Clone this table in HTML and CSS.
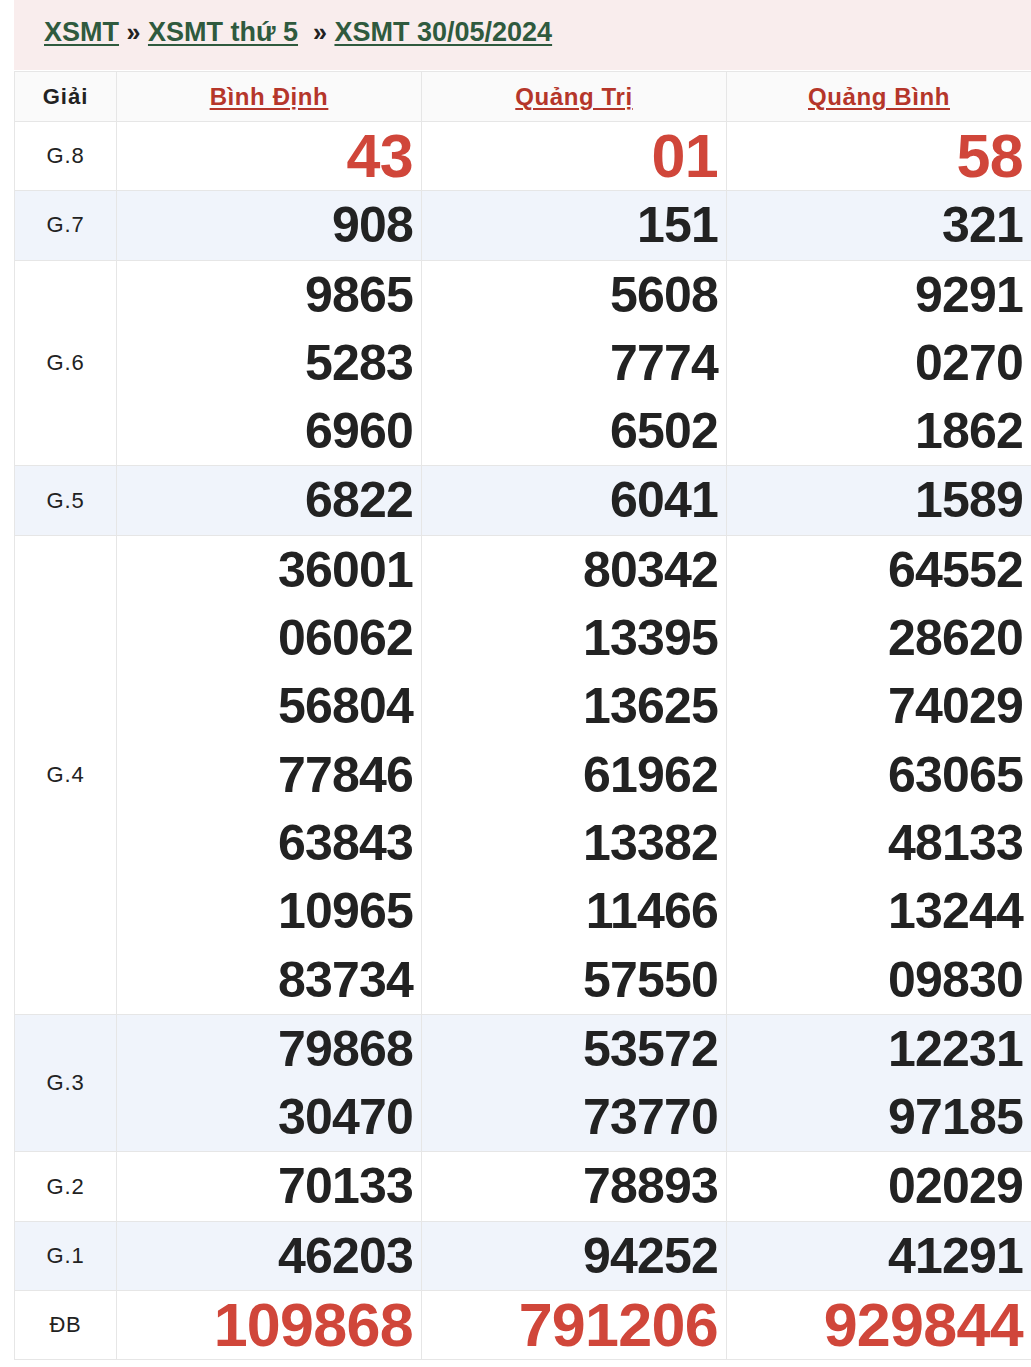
FILE: index.html
```html
<!DOCTYPE html>
<html lang="vi">
<head>
<meta charset="utf-8">
<title>XSMT 30/05/2024</title>
<link rel="stylesheet" href="styles.css">
</head>
<body>
<div class="page">
  <div class="crumbs">
    <a href="#">XSMT</a> <span class="sep">»</span> <a href="#">XSMT thứ 5</a> &nbsp;<span class="sep">»</span> <a href="#">XSMT 30/05/2024</a>
  </div>
  <table class="results">
    <colgroup>
      <col class="c-label"><col class="c-prov"><col class="c-prov"><col class="c-prov">
    </colgroup>
    <thead>
      <tr class="head">
        <th class="label-h">Giải</th>
        <th><a href="#">Bình Định</a></th>
        <th><a href="#">Quảng Trị</a></th>
        <th><a href="#">Quảng Bình</a></th>
      </tr>
    </thead>
    <tbody>
      <tr>
        <td class="lbl">G.8</td>
        <td class="num red big"><div>43</div></td>
        <td class="num red big"><div>01</div></td>
        <td class="num red big"><div>58</div></td>
      </tr>
      <tr class="alt">
        <td class="lbl">G.7</td>
        <td class="num"><div>908</div></td>
        <td class="num"><div>151</div></td>
        <td class="num"><div>321</div></td>
      </tr>
      <tr>
        <td class="lbl">G.6</td>
        <td class="num"><div>9865</div><div>5283</div><div>6960</div></td>
        <td class="num"><div>5608</div><div>7774</div><div>6502</div></td>
        <td class="num"><div>9291</div><div>0270</div><div>1862</div></td>
      </tr>
      <tr class="alt">
        <td class="lbl">G.5</td>
        <td class="num"><div>6822</div></td>
        <td class="num"><div>6041</div></td>
        <td class="num"><div>1589</div></td>
      </tr>
      <tr>
        <td class="lbl">G.4</td>
        <td class="num"><div>36001</div><div>06062</div><div>56804</div><div>77846</div><div>63843</div><div>10965</div><div>83734</div></td>
        <td class="num"><div>80342</div><div>13395</div><div>13625</div><div>61962</div><div>13382</div><div>11466</div><div>57550</div></td>
        <td class="num"><div>64552</div><div>28620</div><div>74029</div><div>63065</div><div>48133</div><div>13244</div><div>09830</div></td>
      </tr>
      <tr class="alt">
        <td class="lbl">G.3</td>
        <td class="num"><div>79868</div><div>30470</div></td>
        <td class="num"><div>53572</div><div>73770</div></td>
        <td class="num"><div>12231</div><div>97185</div></td>
      </tr>
      <tr>
        <td class="lbl">G.2</td>
        <td class="num"><div>70133</div></td>
        <td class="num"><div>78893</div></td>
        <td class="num"><div>02029</div></td>
      </tr>
      <tr class="alt">
        <td class="lbl">G.1</td>
        <td class="num"><div>46203</div></td>
        <td class="num"><div>94252</div></td>
        <td class="num"><div>41291</div></td>
      </tr>
      <tr>
        <td class="lbl">ĐB</td>
        <td class="num red big"><div>109868</div></td>
        <td class="num red big"><div>791206</div></td>
        <td class="num red big"><div>929844</div></td>
      </tr>
    </tbody>
  </table>
</div>
</body>
</html>
```
FILE: styles.css
```css
html, body {
  margin: 0;
  padding: 0;
  background: #ffffff;
}
body {
  font-family: "Liberation Sans", Arial, sans-serif;
  color: #222222;
  overflow: hidden;
}
.page {
  margin-left: 14px;
  width: 1017px;
}
.crumbs {
  background: #f9eded;
  height: 70px;
  box-sizing: border-box;
  padding: 15px 0 0 30px;
  font-size: 27px;
  font-weight: bold;
  line-height: 34px;
  color: #222;
}
.crumbs a {
  color: #2f5a3e;
  text-decoration: underline;
  text-underline-offset: 3px;
  text-decoration-thickness: 2px;
}
.crumbs .sep {
  color: #222;
  font-size: 25px;
}
.results {
  width: 1017px;
  table-layout: fixed;
  border-collapse: collapse;
  margin-top: 1px;
}
.c-label { width: 102px; }
.c-prov { width: 305px; }
.results th,
.results td {
  border: 1px solid #e6e6e6;
  padding: 0;
}
.results tr.head th {
  background: #fafafa;
  height: 49px;
  font-size: 24px;
  letter-spacing: 0.6px;
  font-weight: bold;
  text-align: center;
  vertical-align: middle;
}
.results th a {
  color: #b5362a;
  text-decoration: underline;
  text-underline-offset: 3px;
  text-decoration-thickness: 2px;
}
.results tr.head th.label-h {
  color: #222;
  font-size: 22px;
  letter-spacing: 1px;
}
.results tr.alt td {
  background: #f0f4fb;
}
.lbl {
  text-align: center;
  vertical-align: middle;
  font-size: 22px;
  letter-spacing: 0.8px;
  color: #222;
}
.num {
  text-align: right;
  padding-right: 8px !important;
  font-weight: bold;
  font-size: 50px;
  letter-spacing: -0.8px;
  line-height: 68.3px;
  color: #222;
}
.num.big {
  font-size: 61px;
  letter-spacing: -0.7px;
}
.num.red {
  color: #d0463a;
}
```
